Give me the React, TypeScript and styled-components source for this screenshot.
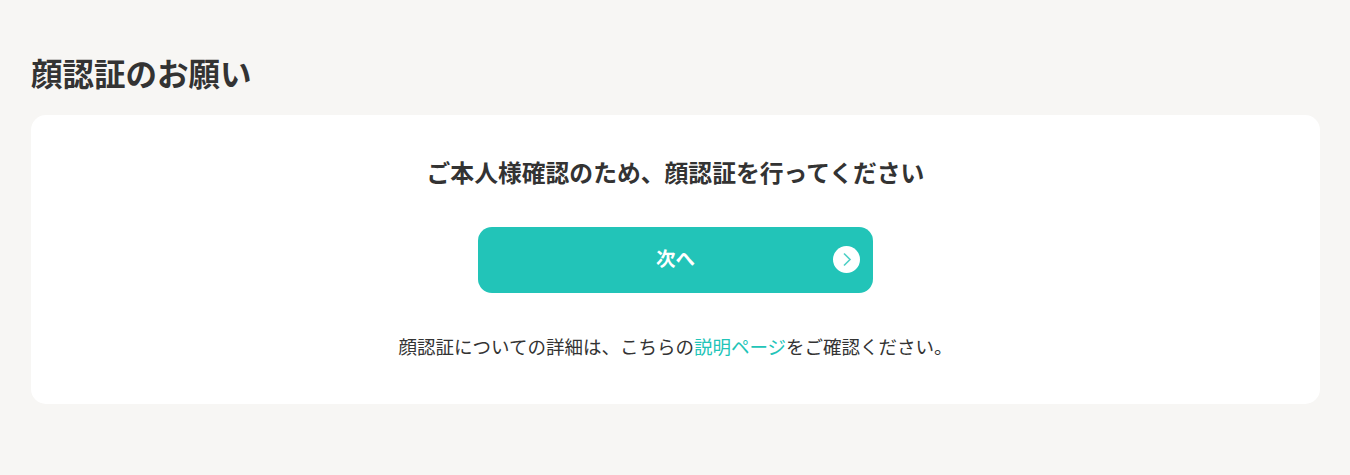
import React from 'react';
import styled, { createGlobalStyle } from 'styled-components';

const GlobalStyle = createGlobalStyle`
  html, body {
    margin: 0;
    padding: 0;
    background: #f7f6f4;
  }
  body {
    font-family: "Noto Sans CJK JP", "Liberation Sans", sans-serif;
    color: #333;
  }
`;

const Page = styled.div`
  width: 1350px;
  height: 475px;
  box-sizing: border-box;
  padding: 52px 30px 0 31px;
  overflow: hidden;
`;

const Heading = styled.h1`
  margin: 0 0 22px;
  font-size: 31.5px;
  line-height: 41px;
  font-weight: 700;
  color: #333;
`;

const Card = styled.section`
  height: 289px;
  box-sizing: border-box;
  padding: 39px 0 0;
  background: #fff;
  border-radius: 15px;
  display: flex;
  flex-direction: column;
  align-items: center;
`;

const Lead = styled.p`
  margin: 0 0 38px;
  font-size: 23.8px;
  line-height: 35px;
  font-weight: 700;
`;

const NextButton = styled.a`
  position: relative;
  width: 395px;
  height: 66px;
  border-radius: 14px;
  background: #22c4b8;
  color: #fff;
  font-size: 19.5px;
  line-height: 62px;
  font-weight: 700;
  display: flex;
  justify-content: center;
`;

const Arrow = styled.span`
  position: absolute;
  right: 13px;
  top: 19px;
  width: 27px;
  height: 27px;
  border-radius: 50%;
  background: #fff;
  display: flex;
  align-items: center;
  justify-content: center;
`;

const Note = styled.p`
  margin: 40px 0 0;
  font-size: 18.5px;
  line-height: 27px;
`;

const NoteLink = styled.a`
  color: #22c4b8;
`;

export default function App() {
  return (
    <Page>
      <GlobalStyle />
      <Heading>顔認証のお願い</Heading>
      <Card>
        <Lead>ご本人様確認のため、顔認証を行ってください</Lead>
        <NextButton>
          次へ
          <Arrow>
            <svg width="13" height="15" viewBox="0 0 13 15" fill="none">
              <path d="M4 1.5l6 6-6 6" stroke="#22c4b8" strokeWidth="1.6" opacity="0.8" />
            </svg>
          </Arrow>
        </NextButton>
        <Note>
          顔認証についての詳細は、こちらの<NoteLink>説明ページ</NoteLink>をご確認ください。
        </Note>
      </Card>
    </Page>
  );
}
